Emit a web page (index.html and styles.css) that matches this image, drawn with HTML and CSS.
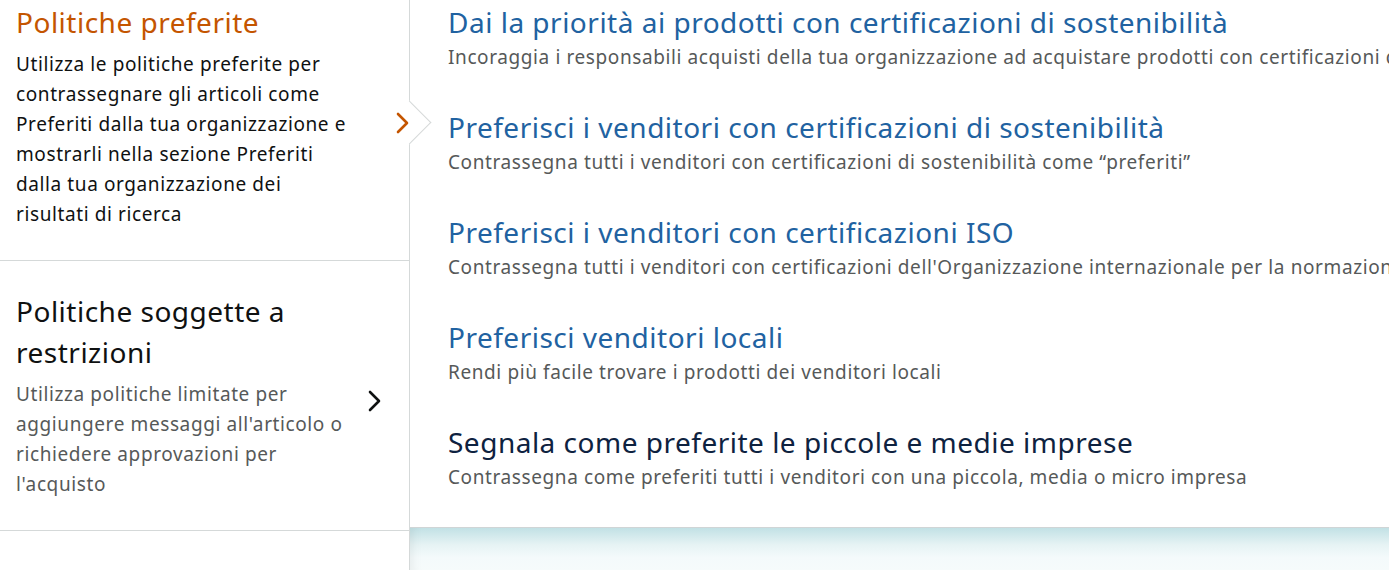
FILE: index.html
```html
<!DOCTYPE html>
<html lang="it">
<head>
  <meta charset="UTF-8">
  <meta name="viewport" content="width=device-width, initial-scale=1.0">
  <title>Politiche di acquisto</title>
  <link rel="stylesheet" href="styles.css">
</head>
<body>
  <div class="page">
    <div class="sidebar">
      <div class="policy selected">
        <div class="policy-text">
          <h2>Politiche preferite</h2>
          <p>Utilizza le politiche preferite per contrassegnare gli articoli come Preferiti dalla tua organizzazione e mostrarli nella sezione Preferiti dalla tua organizzazione dei risultati di ricerca</p>
        </div>
        <svg class="chevron" width="14" height="22" viewBox="0 0 14 22"><path d="M2 2 L11 11 L2 20" fill="none" stroke="currentColor" stroke-width="2.6" stroke-linecap="round" stroke-linejoin="round"/></svg>
        <div class="notch"></div>
      </div>
      <div class="policy">
        <div class="policy-text">
          <h2>Politiche soggette a restrizioni</h2>
          <p>Utilizza politiche limitate per aggiungere messaggi all'articolo o richiedere approvazioni per l'acquisto</p>
        </div>
        <svg class="chevron" width="14" height="22" viewBox="0 0 14 22"><path d="M2 2 L11 11 L2 20" fill="none" stroke="currentColor" stroke-width="2.6" stroke-linecap="round" stroke-linejoin="round"/></svg>
      </div>
    </div>

    <div class="options">
      <ul class="option-list">
        <li>
          <a href="#">Dai la priorità ai prodotti con certificazioni di sostenibilità</a>
          <span>Incoraggia i responsabili acquisti della tua organizzazione ad acquistare prodotti con certificazioni di sostenibilità</span>
        </li>
        <li>
          <a href="#">Preferisci i venditori con certificazioni di sostenibilità</a>
          <span>Contrassegna tutti i venditori con certificazioni di sostenibilità come “preferiti”</span>
        </li>
        <li>
          <a href="#">Preferisci i venditori con certificazioni ISO</a>
          <span>Contrassegna tutti i venditori con certificazioni dell'Organizzazione internazionale per la normazione (ISO) come “preferiti”</span>
        </li>
        <li>
          <a href="#">Preferisci venditori locali</a>
          <span>Rendi più facile trovare i prodotti dei venditori locali</span>
        </li>
        <li class="active">
          <a href="#">Segnala come preferite le piccole e medie imprese</a>
          <span>Contrassegna come preferiti tutti i venditori con una piccola, media o micro impresa</span>
        </li>
      </ul>
      <div class="band"></div>
    </div>
  </div>
</body>
</html>
```

FILE: styles.css
```css
body {
  margin: 0;
  font-family: "Noto Sans", Arial, sans-serif;
  color: #0f1111;
  background: #fff;
  overflow: hidden;
}

.page {
  display: flex;
  height: 570px;
}

.sidebar {
  width: 409px;
  flex-shrink: 0;
  border-right: 1px solid #d5d9d9;
}

.policy {
  position: relative;
  display: flex;
  align-items: center;
  padding: 2px 0 31px 16px;
  border-bottom: 1px solid #d5d9d9;
}

.policy + .policy {
  padding-top: 30px;
}

.policy-text {
  width: 338px;
}

.policy h2 {
  margin: 0;
  font-size: 28px;
  letter-spacing: 0.5px;
  line-height: 41px;
  font-weight: 400;
  color: #0f1111;
}

.policy p {
  margin: 6px 0 0;
  font-size: 19px;
  letter-spacing: 0.6px;
  line-height: 30px;
  color: #565959;
}

.policy.selected h2 {
  color: #c45500;
  line-height: 40px;
}

.policy.selected p {
  color: #0f1111;
  margin-top: 7px;
}

.chevron {
  margin-left: auto;
  margin-right: 27px;
  margin-top: 12px;
  color: #0f1111;
}

.policy.selected .chevron {
  margin-right: -1px;
  margin-top: 14px;
  color: #c45500;
  position: relative;
  z-index: 3;
}

.notch {
  position: absolute;
  right: -16px;
  top: 107px;
  width: 30px;
  height: 30px;
  background: #fff;
  border-top: 1px solid #d5d9d9;
  border-right: 1px solid #d5d9d9;
  transform: rotate(45deg);
  z-index: 2;
}

.options {
  flex: 1;
  min-width: 0;
  display: flex;
  flex-direction: column;
}

.option-list {
  list-style: none;
  margin: 0;
  padding: 0 0 2px;
  flex: 1;
}

.option-list li {
  padding: 4px 0 35px 38px;
  white-space: nowrap;
  overflow: hidden;
}

.option-list a {
  display: block;
  font-size: 28px;
  letter-spacing: 0.5px;
  line-height: 36px;
  color: #2162a1;
  text-decoration: none;
}

.option-list li.active a {
  color: #0e2240;
}

.option-list span {
  display: block;
  margin-top: 4px;
  font-size: 19px;
  letter-spacing: 0.6px;
  line-height: 26px;
  color: #565959;
}

.band {
  height: 42px;
  border-top: 1px solid #d0d5d6;
  background: linear-gradient(to bottom, #c2e1e5 0%, #e6f3f4 40%, #f4fafb 70%, #f6fbfb 100%);
  box-shadow: inset 12px 0 10px -8px rgba(0, 0, 0, 0.05);
}
```
